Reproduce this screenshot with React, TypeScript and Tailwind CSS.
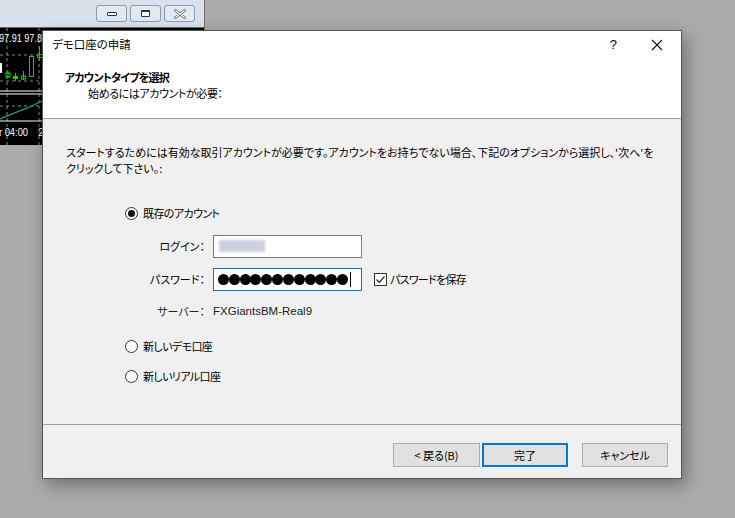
import React from 'react'

const jp = '[font-family:"Noto_Sans_CJK_JP","Noto_Sans",sans-serif] [font-feature-settings:"palt"]'

function Radio({ checked, label }: { checked?: boolean; label: string }) {
  return (
    <div className="flex items-center gap-[5px]">
      <span className="w-[13px] h-[13px] rounded-full border border-[#333] bg-white flex items-center justify-center">
        {checked && <span className="w-[7px] h-[7px] rounded-full bg-[#111]" />}
      </span>
      <span className="tracking-[-0.6px]">{label}</span>
    </div>
  )
}

function ChartBehind() {
  return (
    <svg width="204" height="117" className="block bg-black">
      <line x1="7" y1="0" x2="7" y2="117" stroke="#8a8a8a" strokeDasharray="3 3" />
      <line x1="39" y1="0" x2="39" y2="117" stroke="#8a8a8a" strokeDasharray="3 3" />
      <line x1="0" y1="27" x2="204" y2="27" stroke="#8a8a8a" strokeDasharray="3 3" />
      <line x1="0" y1="53" x2="204" y2="53" stroke="#8a8a8a" strokeDasharray="3 3" />
      <line x1="0" y1="63" x2="204" y2="63" stroke="#fff" />
      <line x1="0" y1="66" x2="204" y2="66" stroke="#fff" />
      <line x1="0" y1="78" x2="204" y2="78" stroke="#8a8a8a" strokeDasharray="3 3" />
      <line x1="0" y1="93" x2="204" y2="93" stroke="#fff" />
      <polyline points="0,91 12,86 22,82 32,78 42,73" fill="none" stroke="#20b2aa" strokeWidth="1.2" />
      <text x="-1" y="14" fill="#fff" fontSize="11" fontFamily="Liberation Sans" textLength="43" lengthAdjust="spacingAndGlyphs">97.91 97.8</text>
      <rect x="-3" y="35" width="5" height="10" fill="#fff" />
      <line x1="8" y1="43" x2="8" y2="50" stroke="#00e000" />
      <rect x="6" y="45" width="4" height="4" fill="none" stroke="#00e000" />
      <line x1="15.5" y1="45" x2="15.5" y2="53" stroke="#00e000" />
      <rect x="13" y="48" width="5" height="3" fill="#00e000" />
      <line x1="23.5" y1="43" x2="23.5" y2="52" stroke="#00e000" />
      <rect x="21.5" y="48" width="4" height="3" fill="none" stroke="#00e000" />
      <rect x="29.5" y="28.5" width="4" height="20" fill="none" stroke="#00e000" />
      <line x1="39.5" y1="18" x2="39.5" y2="33" stroke="#00e000" />
      <rect x="37.5" y="26.5" width="5" height="3" fill="none" stroke="#00e000" />
      <text x="-1" y="108" fill="#fff" fontSize="11" fontFamily="Liberation Sans" textLength="29" lengthAdjust="spacingAndGlyphs">r 04:00</text>
      <text x="38" y="108" fill="#fff" fontSize="11" fontFamily="Liberation Sans">2</text>
    </svg>
  )
}

function TitleBtn({ children }: { children: React.ReactNode }) {
  return (
    <div className="w-[31px] h-[17px] rounded-[3px] border border-[#8a9bb0] bg-[#e3e9f1] flex items-center justify-center">
      {children}
    </div>
  )
}

export default function App() {
  return (
    <div className={`relative w-[735px] h-[518px] bg-[#ababab] overflow-hidden text-[11px] text-black ${jp}`}>
      {/* background terminal window */}
      <div className="absolute left-0 top-0 w-[205px] flex flex-col border-r border-[#6e6e6e]">
        <div className="h-[28px] bg-[#d9e1ea] flex items-center justify-end gap-[3px] pr-[9px] border-b border-[#5d6b7b]">
          <TitleBtn>
            <span className="w-[10px] h-[4px] border border-[#333] bg-white rounded-[1px]" />
          </TitleBtn>
          <TitleBtn>
            <span className="w-[9px] h-[7px] border border-[#333] border-t-2 bg-white rounded-[1px]" />
          </TitleBtn>
          <TitleBtn>
            <svg width="12" height="10" viewBox="0 0 12 10">
              <path d="M1.5 1.5 L10.5 8.5 M10.5 1.5 L1.5 8.5" stroke="#555" strokeWidth="2.6" strokeLinecap="round" />
              <path d="M1.5 1.5 L10.5 8.5 M10.5 1.5 L1.5 8.5" stroke="#fff" strokeWidth="1.2" strokeLinecap="round" />
            </svg>
          </TitleBtn>
        </div>
        <ChartBehind />
      </div>

      {/* dialog */}
      <div className="absolute left-[42px] top-[30px] w-[640px] h-[449px] bg-[#f0f0f0] border border-[#555] shadow-[4px_6px_16px_rgba(0,0,0,0.35)] flex flex-col">
        <div className="h-[88px] bg-white border-b border-[#a0a0a0] flex flex-col">
          <div className="h-[28px] flex items-center pl-[9px] pr-[17px]">
            <span className="flex-1 text-[11.5px]">デモ口座の申請</span>
            <span className="[font-family:'Liberation_Sans',sans-serif] text-[13px]">?</span>
            <svg width="14" height="14" viewBox="0 0 14 14" className="ml-[33px]">
              <path d="M2 2 L12 12 M12 2 L2 12" stroke="#111" strokeWidth="1.1" />
            </svg>
          </div>
          <div className="pl-[22px] pt-[10px] font-bold leading-[16px] tracking-[-0.8px]">アカウントタイプを選択</div>
          <div className="pl-[45px] leading-[16px] tracking-[-0.4px]">始めるにはアカウントが必要：</div>
        </div>

        <div className="flex-1 flex flex-col">
          <div className="pl-[23px] pt-[25px] leading-[16px] pr-[10px]">
            スタートするためには有効な取引アカウントが必要です。アカウントをお持ちでない場合、下記のオプションから選択し、'次へ'を
            <br />
            クリックして下さい。:
          </div>

          <div className="pl-[82px] pt-[29px] flex flex-col">
            <Radio checked label="既存のアカウント" />
            <div className="mt-[13px] flex flex-col gap-[10px]">
              <div className="flex items-center">
                <span className="w-[88px] text-right pr-[8px]">ログイン：</span>
                <div className="w-[149px] h-[23px] bg-white border border-[#7a7a7a] flex items-center pl-[5px]">
                  <span className="w-[46px] h-[12px] bg-[repeating-linear-gradient(90deg,#c4c7d4_0px,#d8d9e2_2px,#c4c7d4_4px)] blur-[1px]" />
                </div>
              </div>
              <div className="flex items-center">
                <span className="w-[88px] text-right pr-[8px]">パスワード：</span>
                <div className="w-[149px] h-[23px] bg-white border border-[#0078d7] flex items-center pl-[4px]">
                  {Array.from({ length: 12 }).map((_, i) => (
                    <span key={i} className="w-[11px] h-[11px] rounded-full bg-black mr-[-0.2px] shrink-0" />
                  ))}
                  <span className="w-[1px] h-[15px] bg-black ml-[2px]" />
                </div>
                <div className="flex items-center ml-[12px] gap-[3px]">
                  <span className="w-[13px] h-[13px] border border-[#333] bg-white flex items-center justify-center">
                    <svg width="11" height="11" viewBox="0 0 11 11">
                      <path d="M1.5 5.5 L4.3 8.3 L9.5 2.5" fill="none" stroke="#222" strokeWidth="1.2" />
                    </svg>
                  </span>
                  <span className="tracking-[-0.7px]">パスワードを保存</span>
                </div>
              </div>
              <div className="flex items-center mt-[2px]">
                <span className="w-[88px] text-right pr-[8px] text-[#222]">サーバー：</span>
                <span className="[font-family:'Liberation_Sans',sans-serif] text-[11.5px] text-[#222]">FXGiantsBM-Real9</span>
              </div>
            </div>
            <div className="mt-[18px] flex flex-col gap-[14px]">
              <Radio label="新しいデモ口座" />
              <Radio label="新しいリアル口座" />
            </div>
          </div>
        </div>

        <div className="h-[54px] border-t border-[#a0a0a0] flex items-start justify-end pr-[13px] pt-[18px]">
          <button className="w-[87px] h-[24px] bg-[#e1e1e1] border border-[#adadad]">&lt; 戻る(B)</button>
          <button className="w-[86px] h-[24px] bg-[#e1e1e1] border-2 border-[#0078d7] ml-[2px]">完了</button>
          <button className="w-[86px] h-[24px] bg-[#e1e1e1] border border-[#adadad] ml-[14px]">キャンセル</button>
        </div>
      </div>
    </div>
  )
}
